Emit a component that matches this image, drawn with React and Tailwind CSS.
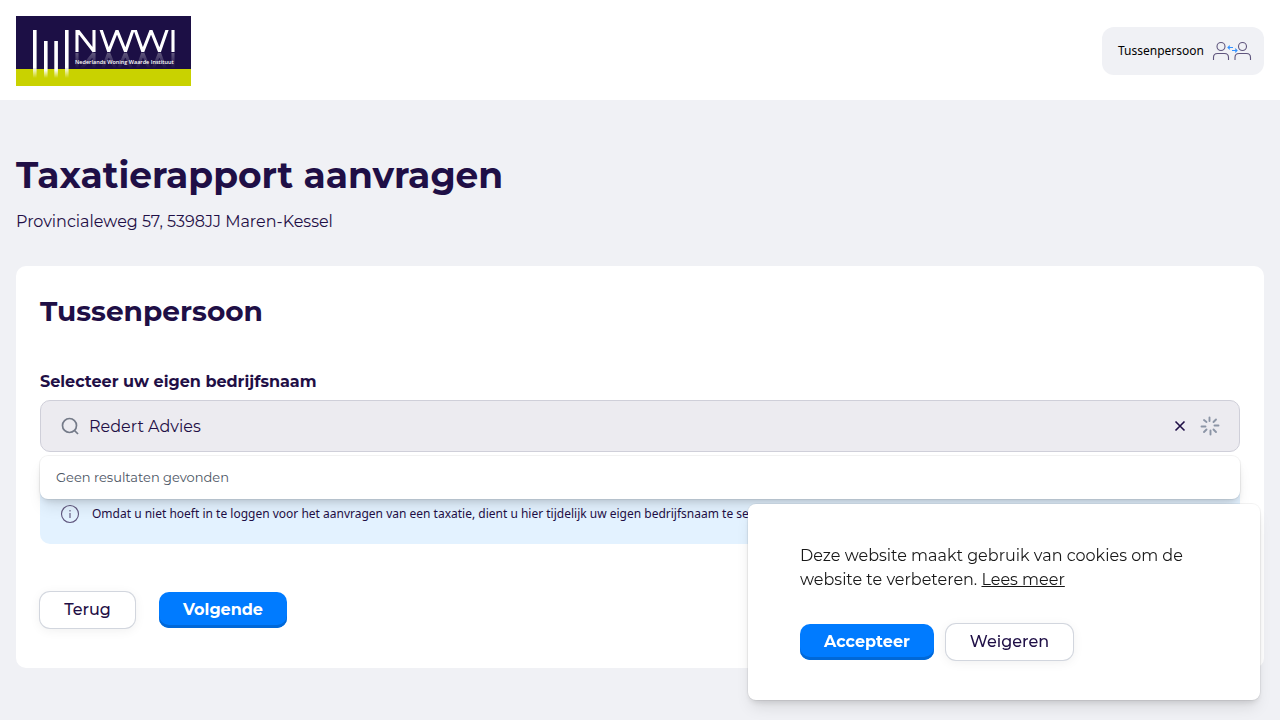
import { useState } from 'react';

function Logo() {
  return (
    <svg width="175" height="70" viewBox="0 0 175 70" role="img" aria-label="NWWI">
      <defs>
        <linearGradient id="bar" x1="0" y1="0" x2="0" y2="1">
          <stop offset="0" stopColor="#fff" />
          <stop offset="0.78" stopColor="#fff" />
          <stop offset="1" stopColor="#fff" stopOpacity="0" />
        </linearGradient>
        <linearGradient id="mirror" x1="0" y1="0" x2="0" y2="1">
          <stop offset="0" stopColor="#fff" stopOpacity="0.3" />
          <stop offset="1" stopColor="#fff" stopOpacity="0" />
        </linearGradient>
        <clipPath id="letters">
          <rect x="58" y="14" width="102" height="22" />
        </clipPath>
      </defs>
      <rect width="175" height="70" fill="#1c0f45" />
      <rect y="53" width="175" height="17" fill="#c9d200" />
      <rect x="17" y="14" width="3.600" height="48" fill="url(#bar)" />
      <rect x="28" y="25" width="3.600" height="37" fill="url(#bar)" />
      <rect x="38.300" y="25" width="3.600" height="37" fill="url(#bar)" />
      <rect x="49" y="14" width="3.600" height="48" fill="url(#bar)" />
      <g clipPath="url(#letters)">
        <path
          d="M61 38V13.500L78 35.500V12M84.500 12 92.700 35.500 101 14.500 109.500 35.500 117.700 12M118.500 12 126.800 35.500 135 14.500 143.500 35.500 151.700 12M157 12V38"
          fill="none"
          stroke="#fff"
          strokeWidth="3.100"
        />
      </g>
      <path
        d="M61 37V52M78 37 66 52M78 37V52M92.700 37 87 52M92.700 37 99 52M109.500 37 103 52M109.500 37 115 52M126.800 37 121.500 52M126.800 37 133 52M143.500 37 137.500 52M143.500 37 149 52M157 37V52.500"
        fill="none"
        stroke="url(#mirror)"
        strokeWidth="3.100"
      />
      <text x="59" y="47.500" fill="#fff" fontFamily="'Open Sans', sans-serif" fontSize="5.500" fontWeight="600">
        Nederlands Woning Waarde Instituut
      </text>
    </svg>
  );
}

function IntermediaryIcon() {
  return (
    <svg width="40" height="20" viewBox="0 0 40 20" fill="none" strokeWidth="1.1" aria-hidden="true">
      <g stroke="#5f557d">
        <circle cx="9" cy="5.500" r="4" />
        <path d="M1.500 19V16.500Q1.500 12.500 5.500 12.500H12.500Q16.500 12.500 16.500 16.500V19" />
        <circle cx="30.500" cy="5.500" r="4" />
        <path d="M23 19V16.500Q23 12.500 27 12.500H34.500Q38.500 12.500 38.500 16.500V19" />
      </g>
      <path d="M21 6.500H16M17.800 4.700 16 6.500 17.800 8.300M20 9.500H25M23.200 7.700 25 9.500 23.200 11.300" stroke="#3391ff" />
    </svg>
  );
}

function Spinner() {
  return (
    <svg width="20" height="20" viewBox="0 0 20 20" fill="none" stroke="#8c95a6" strokeWidth="1.9" strokeLinecap="round" aria-hidden="true">
      <path d="M9.500 1.500V5M13.500 6 16 3.500M14.500 9.500H18.500M13.500 13.500 16 16M10.500 14.500V18.500M6.500 13.500 4 16M5.500 10.500H1.500M6.500 6 4 4" />
    </svg>
  );
}

function Button({ primary = false, className = '', children }) {
  const look = primary
    ? 'bg-[#007bff] font-bold text-white shadow-[inset_0_-3px_0_#0068d8]'
    : 'bg-white font-medium text-[#1f0f46] shadow-[0_0_0_1px_#d2d6de,0_2px_12px_rgba(0,0,0,0.07)]';
  return (
    <button type="button" className={`h-9 rounded-[10px] text-center text-base leading-9 ${look} ${className}`}>
      {children}
    </button>
  );
}

function SearchField() {
  const [value, setValue] = useState('Redert Advies');
  return (
    <div className="relative z-10">
      <div className="flex h-13 items-center rounded-[10px] border border-[#cfcfd9] bg-[#ecebf0] pr-[19px] pl-5">
        <svg width="20" height="20" viewBox="0 0 20 20" fill="none" stroke="#747a88" strokeWidth="1.7" className="shrink-0" aria-hidden="true">
          <circle cx="8.500" cy="9.500" r="7" />
          <path d="M13.500 14.500 17 18" />
        </svg>
        <input
          id="company"
          type="text"
          value={value}
          onChange={(e) => setValue(e.target.value)}
          className="ml-2 h-full min-w-0 flex-1 bg-transparent text-base text-[#1f0f46] outline-none"
        />
        <button type="button" aria-label="Wissen" onClick={() => setValue('')} className="mr-2.5 flex size-5 items-center justify-center">
          <svg width="12" height="12" viewBox="0 0 12 12" stroke="#1f0f46" strokeWidth="1.600" aria-hidden="true">
            <path d="M1.500 1.500 10.500 10.500M10.500 1.500 1.500 10.500" />
          </svg>
        </button>
        <Spinner />
      </div>
      <div className="absolute inset-x-0 top-full mt-1 rounded-lg bg-white px-4 py-3 text-[13px] leading-[19px] text-[#4b5563] shadow-[0_0_0_1px_rgba(0,0,0,0.05),0_10px_15px_-3px_rgba(0,0,0,0.1),0_4px_6px_-2px_rgba(0,0,0,0.12)]">
        Geen resultaten gevonden
      </div>
    </div>
  );
}

export default function App() {
  return (
    <div className="min-h-screen bg-[#f0f1f5] font-[Montserrat,Inter,sans-serif] text-[#1f0f46]">
      <header className="flex h-25 items-center justify-between bg-white px-4 pt-0.5">
        <a href="#" aria-label="NWWI">
          <Logo />
        </a>
        <div className="flex h-12 items-center gap-2 rounded-xl bg-[#f0f1f5] pr-3 pl-4 font-['Noto_Sans',sans-serif] text-[12px] text-black">
          Tussenpersoon
          <IntermediaryIcon />
        </div>
      </header>

      <main className="px-4 pt-[54px]">
        <h1 className="text-4xl leading-[42px] font-bold">Taxatierapport aanvragen</h1>
        <p className="mt-3.5 text-base leading-6">Provincialeweg 57, 5398JJ Maren-Kessel</p>

        <section className="mt-8 rounded-[10px] bg-white px-6 pt-6 pb-10">
          <h2 className="text-[28px] leading-[42px] font-bold">Tussenpersoon</h2>
          <label htmlFor="company" className="mt-9.5 mb-1.5 block text-base leading-6 font-bold">
            Selecteer uw eigen bedrijfsnaam
          </label>
          <SearchField />
          <div className="mt-8 flex h-15 items-center gap-3 rounded-[10px] bg-[#e3f2ff] px-5 font-['Noto_Sans',sans-serif] text-[12px]">
            <svg width="20" height="20" viewBox="0 0 20 20" fill="none" stroke="#5f557d" strokeWidth="1.100" className="shrink-0" aria-hidden="true">
              <circle cx="10" cy="10" r="8.500" />
              <path d="M10 9V14M10 6V7.500" />
            </svg>
            <span>
              Omdat u niet hoeft in te loggen voor het aanvragen van een taxatie, dient u hier tijdelijk uw eigen bedrijfsnaam te selecteren.
            </span>
          </div>
          <div className="mt-12 flex gap-6">
            <Button className="w-[95px]">Terug</Button>
            <Button primary className="w-32">Volgende</Button>
          </div>
        </section>
      </main>

      <aside
        aria-label="Cookies"
        className="fixed right-5 bottom-5 z-20 w-lg rounded-lg bg-white px-13 py-10 shadow-[0_0_0_1px_rgba(0,0,0,0.05),0_10px_15px_-3px_rgba(0,0,0,0.1),0_4px_6px_-2px_rgba(0,0,0,0.12)]"
      >
        <p className="text-base leading-6 text-[#181818]">
          Deze website maakt gebruik van cookies om de website te verbeteren.{' '}
          <a href="#" className="underline">Lees meer</a>
        </p>
        <div className="mt-8 flex gap-3">
          <Button primary className="w-[134px]">Accepteer</Button>
          <Button className="w-[127px]">Weigeren</Button>
        </div>
      </aside>
    </div>
  );
}
